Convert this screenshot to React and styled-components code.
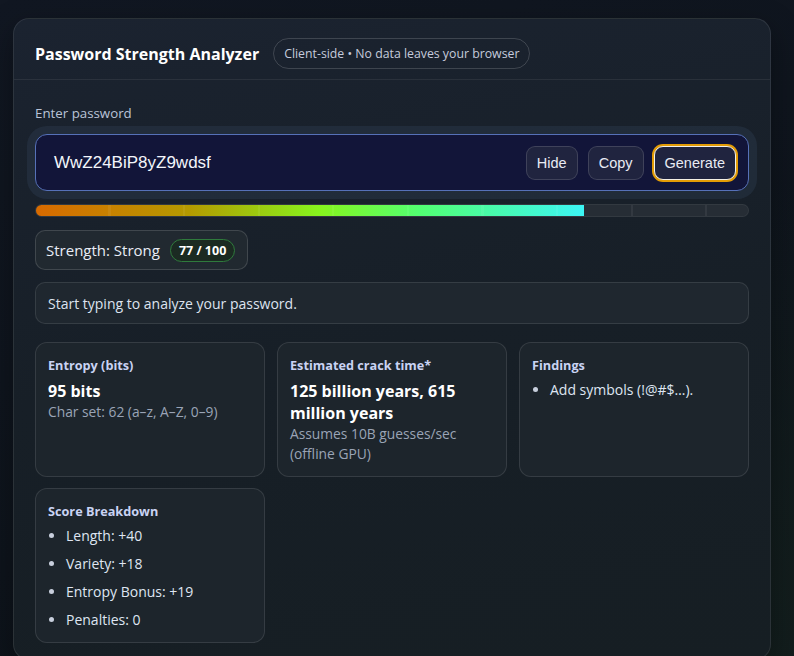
import React, { useState } from 'react';
import styled, { createGlobalStyle } from 'styled-components';

const GlobalStyle = createGlobalStyle`
  html, body { margin: 0; padding: 0; }
  body {
    background: radial-gradient(circle at 80% 100%, #15221f 0%, transparent 55%), linear-gradient(160deg, #111722 0%, #0e141c 60%, #0c1218 100%);
    min-height: 656px;
    font-family: "Open Sans", "Noto Sans", sans-serif;
    color: #e6ebf5;
    overflow: hidden;
  }
`;

const Page = styled.div`
  padding: 18px 0 0 13px;
`;

const Panel = styled.div`
  width: 758px; box-sizing: border-box;
  border: 1px solid rgba(255,255,255,.09); border-radius: 16px;
  background: linear-gradient(170deg, #1b2330 0%, #171f27 50%, #161e23 100%);
  box-shadow: 0 10px 30px rgba(0,0,0,.35);
`;

const Header = styled.div`
  display: flex; align-items: center; gap: 14px;
  padding: 19px 21px 10px;
  border-bottom: 1px solid rgba(255,255,255,.07);
`;

const Title = styled.h1`
  margin: 0; font-size: 16px; font-weight: 700; color: #fff;
`;

const Badge = styled.span`
  display: inline-flex; align-items: center; height: 31px; box-sizing: border-box; padding: 0 10px;
  border: 1px solid rgba(255,255,255,.16); border-radius: 999px;
  font-size: 12.3px; color: #c5cbdc;
`;

const Body = styled.div`
  padding: 24px 21px 16px;
`;

const Label = styled.div`
  font-size: 13.3px; color: #b9c3d8; margin-bottom: 4px;
`;

const InputRing = styled.div`
  margin: 0 -8px; padding: 8px; border-radius: 20px;
  background: rgba(70,95,125,.18);
`;

const InputBox = styled.div`
  display: flex; align-items: center; height: 57px; box-sizing: border-box; padding: 0 12px 0 18px;
  background: #121539; border: 1px solid #5671b8; border-radius: 12px;
`;

const Password = styled.div`
  flex: 1; font-family: "Liberation Sans", Arial, sans-serif; font-size: 17px; color: #f3f5fb;
`;

const Actions = styled.div`
  display: flex; gap: 10px; align-items: center;
`;

const Btn = styled.button`
  height: 34px; padding: 0 10px; border-radius: 9px;
  font-family: "Liberation Sans", Arial, sans-serif; font-size: 14.5px; color: #e8ebf4;
  background: #20243f; border: 1px solid ${p => p.$focus ? '#f4f0e6' : 'rgba(255,255,255,.14)'};
  box-shadow: ${p => p.$focus ? '0 0 0 2px #e39c06' : 'none'};
  cursor: pointer;
`;

const Track = styled.div`
  position: relative; height: 13px; margin-top: 5px; border-radius: 999px; overflow: hidden;
  background: #262d35; border: 1px solid rgba(255,255,255,.06); box-sizing: border-box;
  &::after {
    content: ''; position: absolute; inset: 0;
    background: repeating-linear-gradient(90deg, transparent 0 72.5px, rgba(255,255,255,.06) 72.5px 74.6px);
  }
`;

const Fill = styled.div`
  height: 100%;
  background: linear-gradient(90deg, #d86a00 0%, #b49a00 28%, #86f51e 52%, #52ff72 70%, #3cf5f5 100%);
`;

const StrengthPill = styled.div`
  display: inline-flex; align-items: center; gap: 10px; margin-top: 13px;
  height: 40px; padding: 0 12px 0 10px; box-sizing: border-box;
  border: 1px solid rgba(255,255,255,.14); border-radius: 10px; background: #212930;
  font-size: 15px; color: #e9edf6;
`;

const Score = styled.span`
  display: inline-flex; align-items: center; height: 23px; box-sizing: border-box; padding: 0 8px;
  border: 1px solid #2f7a3c; border-radius: 999px; background: #1b2a22;
  font-size: 12.5px; font-weight: 700; color: #fff;
`;

const Message = styled.div`
  margin-top: 12px; height: 42px; box-sizing: border-box; display: flex; align-items: center; padding: 0 12px;
  border: 1px solid rgba(255,255,255,.1); border-radius: 10px; background: #1f272f;
  font-size: 14px; color: #dde3ef;
`;

const Grid = styled.div`
  display: grid; grid-template-columns: repeat(3, 1fr); gap: 11px 12px; margin-top: 18px;
`;

const Card = styled.div`
  border: 1px solid rgba(255,255,255,.11); border-radius: 12px; background: #1d252c;
  padding: 13px 12px 12px;
`;

const CardTitle = styled.div`
  font-size: 12.7px; font-weight: 700; color: #c9d3f3; margin-bottom: 6px;
`;

const Value = styled.div`
  font-size: 16px; font-weight: 700; color: #fff; line-height: 22px;
`;

const Sub = styled.div`
  font-size: 13.8px; color: #9aa4b6; line-height: 20px;
`;

const List = styled.ul`
  margin: 0; padding-left: 18px;
  li { font-size: 14px; color: #dfe5f2; line-height: 20px; margin-bottom: ${p => p.$spaced ? '8px' : '0'}; }
  li:last-child { margin-bottom: 0; }
  li::marker { color: #c8cfdd; }
`;

export default function App() {
  const [visible] = useState(true);
  return (
    <>
      <GlobalStyle />
      <Page>
        <Panel>
          <Header>
            <Title>Password Strength Analyzer</Title>
            <Badge>Client-side • No data leaves your browser</Badge>
          </Header>
          <Body>
            <Label>Enter password</Label>
            <InputRing>
              <InputBox>
                <Password>{visible ? 'WwZ24BiP8yZ9wdsf' : '••••••••••••••••'}</Password>
                <Actions>
                  <Btn>Hide</Btn>
                  <Btn>Copy</Btn>
                  <Btn $focus>Generate</Btn>
                </Actions>
              </InputBox>
            </InputRing>
            <Track>
              <Fill style={{ width: '77%' }} />
            </Track>
            <StrengthPill>
              Strength: Strong <Score>77 / 100</Score>
            </StrengthPill>
            <Message>Start typing to analyze your password.</Message>
            <Grid>
              <Card>
                <CardTitle>Entropy (bits)</CardTitle>
                <Value>95 bits</Value>
                <Sub>Char set: 62 (a–z, A–Z, 0–9)</Sub>
              </Card>
              <Card>
                <CardTitle>Estimated crack time*</CardTitle>
                <Value>125 billion years, 615 million years</Value>
                <Sub>Assumes 10B guesses/sec (offline GPU)</Sub>
              </Card>
              <Card>
                <CardTitle>Findings</CardTitle>
                <List>
                  <li>Add symbols (!@#$…).</li>
                </List>
              </Card>
              <Card>
                <CardTitle>Score Breakdown</CardTitle>
                <List $spaced>
                  <li>Length: +40</li>
                  <li>Variety: +18</li>
                  <li>Entropy Bonus: +19</li>
                  <li>Penalties: 0</li>
                </List>
              </Card>
            </Grid>
          </Body>
        </Panel>
      </Page>
    </>
  );
}
